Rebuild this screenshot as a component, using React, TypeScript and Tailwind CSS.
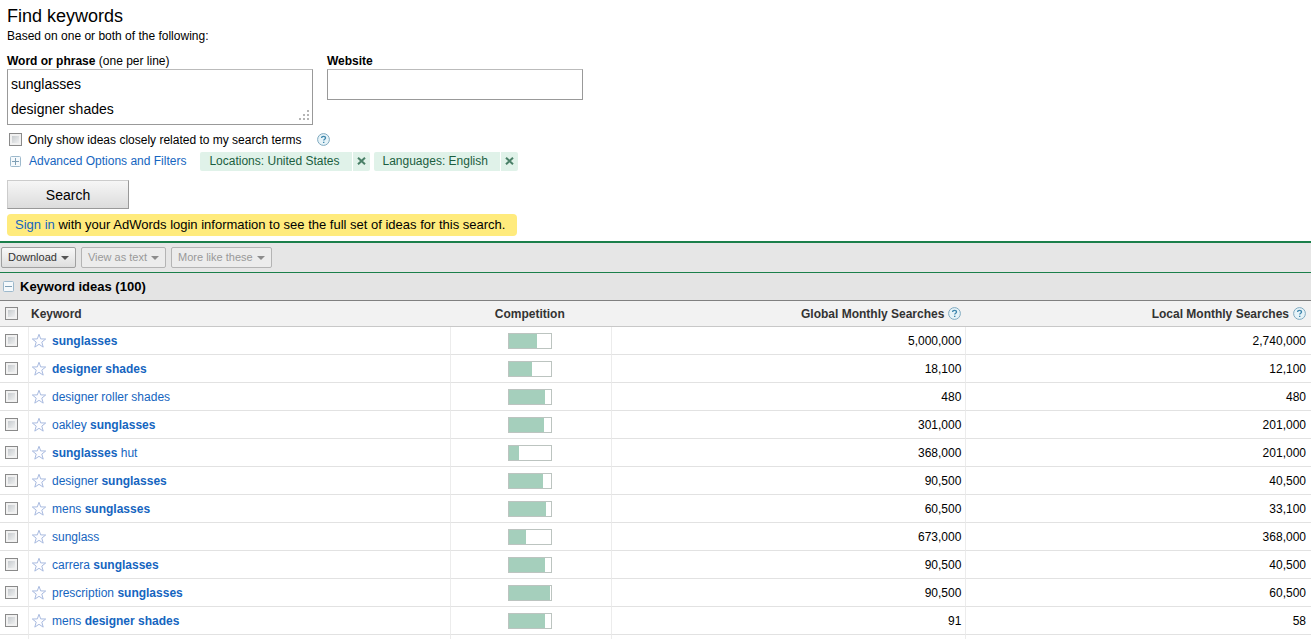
import { useState, type ReactNode } from 'react';
import clsx from 'clsx';

interface KeywordIdea {
  /** Words wrapped in `*` are drawn in bold. */
  keyword: string;
  /** Filled pixels of the 42px competition bar. */
  competition: number;
  global: string;
  local: string;
}

const IDEAS: KeywordIdea[] = [
  { keyword: '*sunglasses*', competition: 28, global: '5,000,000', local: '2,740,000' },
  { keyword: '*designer shades*', competition: 23, global: '18,100', local: '12,100' },
  { keyword: 'designer roller shades', competition: 36, global: '480', local: '480' },
  { keyword: 'oakley *sunglasses*', competition: 35, global: '301,000', local: '201,000' },
  { keyword: '*sunglasses* hut', competition: 10, global: '368,000', local: '201,000' },
  { keyword: 'designer *sunglasses*', competition: 34, global: '90,500', local: '40,500' },
  { keyword: 'mens *sunglasses*', competition: 37, global: '60,500', local: '33,100' },
  { keyword: 'sunglass', competition: 17, global: '673,000', local: '368,000' },
  { keyword: 'carrera *sunglasses*', competition: 36, global: '90,500', local: '40,500' },
  { keyword: 'prescription *sunglasses*', competition: 41, global: '90,500', local: '60,500' },
  { keyword: 'mens *designer shades*', competition: 36, global: '91', local: '58' },
];

function Checkbox({ id, label }: { id?: string; label?: string }) {
  return (
    <input
      id={id}
      type="checkbox"
      aria-label={label}
      className="block size-[13px] shrink-0 appearance-none border border-[#8a8a8a] bg-linear-to-br from-[#bcc1c5] to-[#fafafa] shadow-[inset_0_0_0_2px_#f1f1f1] checked:from-[#1155cc] checked:to-[#1155cc]"
    />
  );
}

function HelpIcon() {
  return (
    <a href="#help" aria-label="Help" className="block shrink-0">
      <svg width="13" height="13" viewBox="0 0 13 13" fill="none">
        <circle cx="6.5" cy="6.5" r="5.9" fill="#e6f3f8" stroke="#7fa9bf" />
        <path
          d="M4.6 5.1c0-1.2.8-1.8 1.9-1.8s2 .6 2 1.6c0 1.3-1.8 1.4-1.8 2.7"
          stroke="#3f87ad"
          strokeWidth="1.3"
        />
        <path d="M6 8.7h1.4v1.3H6z" fill="#3f87ad" />
      </svg>
    </a>
  );
}

function ExpandIcon({ open }: { open?: boolean }) {
  return (
    <svg width="11" height="11" viewBox="0 0 11 11" fill="none" className="shrink-0">
      <rect x=".5" y=".5" width="10" height="10" rx="1" fill="#f5f9fc" stroke="#9db9cc" />
      <path d={open ? 'M2 5.5h7' : 'M2 5.5h7M5.5 2v7'} stroke="#7f9fb5" />
    </svg>
  );
}

function StarIcon() {
  return (
    <svg width="16" height="16" viewBox="0 0 16 16" fill="none" className="shrink-0">
      <path
        d="M8 1.3l1.7 4.6 5 .1-3.9 3.1 1.4 5L8 11.3l-4.2 2.8 1.4-5L1.3 6l5-.1z"
        fill="#fdfdff"
        stroke="#a9bbe0"
        strokeLinejoin="round"
      />
    </svg>
  );
}

function FilterChip({ children, onRemove }: { children: string; onRemove: () => void }) {
  return (
    <span className="flex h-[19px] gap-px leading-[19px] text-[#1b5e3f]">
      <span className="rounded-l-xs bg-[#e0f2e9] pr-3 pl-[9px]">{children}</span>
      <button
        type="button"
        aria-label={`Remove ${children}`}
        onClick={onRemove}
        className="flex w-[17px] items-center justify-center rounded-r-xs bg-[#e0f2e9]"
      >
        <svg width="9" height="8" viewBox="0 0 9 8" fill="none">
          <path d="M1 .7l7 6.6M8 .7L1 7.3" stroke="#4a8068" strokeWidth="2" />
        </svg>
      </button>
    </span>
  );
}

function ToolbarButton({ children, disabled }: { children: string; disabled?: boolean }) {
  return (
    <button
      type="button"
      disabled={disabled}
      className={clsx(
        'flex h-[21px] items-center gap-1 rounded-xs border px-1.5 text-[11px]',
        disabled
          ? 'border-[#b4b4b4] bg-[#ececec] text-[#999]'
          : 'border-[#a0a0a0] bg-linear-to-b from-[#f8f8f8] to-[#dedede] text-[#333]',
      )}
    >
      {children}
      <svg width="8" height="4" viewBox="0 0 8 4" fill={disabled ? '#8c8c8c' : '#555'}>
        <path d="M0 0h8L4 4z" />
      </svg>
    </button>
  );
}

function KeywordText({ text }: { text: string }) {
  return text.split('*').map((part, i) => (i % 2 ? <b key={i}>{part}</b> : part));
}

function NumberHeader({ children }: { children: ReactNode }) {
  return (
    <th scope="col" className="pr-[5px]">
      <span className="flex items-center justify-end gap-1">
        {children}
        <HelpIcon />
      </span>
    </th>
  );
}

export default function App() {
  const [filters, setFilters] = useState(['Locations: United States', 'Languages: English']);

  return (
    <div className="bg-white font-['Liberation_Sans',Arial,sans-serif] text-xs text-black">
      <form className="px-[7px] pt-1 pb-[5px]" onSubmit={(e) => e.preventDefault()}>
        <h1 className="text-lg leading-6">Find keywords</h1>
        <p className="leading-4">Based on one or both of the following:</p>

        <div className="mt-[9px] flex items-start gap-[14px]">
          <div className="w-[306px]">
            <label htmlFor="phrases" className="block leading-4">
              <b>Word or phrase</b> (one per line)
            </label>
            <div className="relative">
              <textarea
                id="phrases"
                rows={2}
                defaultValue={'sunglasses\ndesigner shades'}
                className="block h-14 w-full resize-none overflow-hidden border border-[#999] border-t-[#bbb] px-[3px] py-0.5 text-sm leading-[25px]"
              />
              <svg
                width="11"
                height="11"
                viewBox="0 0 11 11"
                fill="#b5b5b5"
                className="absolute right-[3px] bottom-1"
              >
                <path d="M8 0h2v2H8zM4 4h2v2H4zM8 4h2v2H8zM0 8h2v2H0zM4 8h2v2H4zM8 8h2v2H8z" />
              </svg>
            </div>
          </div>
          <div className="w-64">
            <label htmlFor="website" className="block leading-4 font-bold">
              Website
            </label>
            <input
              id="website"
              type="text"
              className="block h-[31px] w-full border border-[#999] border-t-[#bbb] px-[3px] text-sm"
            />
          </div>
        </div>

        <div className="mt-1 mb-px flex h-[21px] items-center pl-0.5">
          <Checkbox id="related" />
          <label htmlFor="related" className="mr-4 ml-1.5">
            Only show ideas closely related to my search terms
          </label>
          <HelpIcon />
        </div>

        <div className="flex h-5 items-center pl-[3px]">
          <a href="#advanced" className="mr-[14px] flex items-center gap-2 text-[#1565c0]">
            <ExpandIcon />
            Advanced Options and Filters
          </a>
          <div className="flex gap-1">
            {filters.map((f) => (
              <FilterChip key={f} onRemove={() => setFilters(filters.filter((x) => x !== f))}>
                {f}
              </FilterChip>
            ))}
          </div>
        </div>

        <button
          type="submit"
          className="mt-[9px] block h-[29px] w-[122px] border border-[#999] border-t-[#ccc] border-l-[#ccc] bg-linear-to-b from-[#f6f6f6] to-[#dcdcdc] text-sm"
        >
          Search
        </button>

        <p className="mt-[5px] w-fit rounded-sm bg-[#ffeb7d] pr-3 pl-2 text-[13px] leading-[22px]">
          <a href="#signin" className="text-[#1565c0]">
            Sign in
          </a>{' '}
          with your AdWords login information to see the full set of ideas for this search.
        </p>
      </form>

      <div className="flex h-8 items-center gap-[5px] border-t-2 border-b border-[#1b7f4b] bg-[#e6e6e6] px-px">
        <ToolbarButton>Download</ToolbarButton>
        <ToolbarButton disabled>View as text</ToolbarButton>
        <ToolbarButton disabled>More like these</ToolbarButton>
      </div>

      <h2 className="flex h-7 items-center gap-1.5 border-b border-[#808080] bg-[#e4e4e4] pl-[3px] text-[13px] font-bold">
        <ExpandIcon open />
        Keyword ideas (100)
      </h2>

      <table className="w-full table-fixed border-separate border-spacing-0">
        <colgroup>
          <col className="w-[29px]" />
          <col className="w-[32.2%]" />
          <col className="w-[12.3%]" />
          <col className="w-[27%]" />
          <col />
        </colgroup>
        <thead>
          <tr className="h-[26px] bg-[#f2f2f2] text-[#333] *:border-b *:border-[#c8c8c8]">
            <th className="pl-[5px]">
              <Checkbox label="Select all keywords" />
            </th>
            <th scope="col" className="pl-0.5 text-left">
              Keyword
            </th>
            <th scope="col" className="pr-1">
              Competition
            </th>
            <NumberHeader>Global Monthly Searches</NumberHeader>
            <NumberHeader>Local Monthly Searches</NumberHeader>
          </tr>
        </thead>
        <tbody>
          {IDEAS.map((idea) => (
            <tr
              key={idea.keyword}
              className="h-7 *:border-r *:border-b *:border-r-[#ececec] *:border-b-[#e2e2e2] *:last:border-r-0"
            >
              <td className="pl-[5px]">
                <Checkbox label={idea.keyword.replaceAll('*', '')} />
              </td>
              <td className="pl-0.5">
                <span className="flex items-center gap-[5px]">
                  <StarIcon />
                  <a href="#keyword" className="text-[#1565c0]">
                    <KeywordText text={idea.keyword} />
                  </a>
                </span>
              </td>
              <td className="pr-0.5">
                <div className="mx-auto h-4 w-11 border border-[#bcc4c0]">
                  <div className="h-full bg-[#a5cfbc]" style={{ width: idea.competition }} />
                </div>
              </td>
              <td className="pr-1 text-right">{idea.global}</td>
              <td className="pr-[5px] text-right">{idea.local}</td>
            </tr>
          ))}
          <tr className="h-1 *:border-r *:border-[#ececec] *:last:border-r-0">
            <td />
            <td />
            <td />
            <td />
            <td />
          </tr>
        </tbody>
      </table>
    </div>
  );
}
